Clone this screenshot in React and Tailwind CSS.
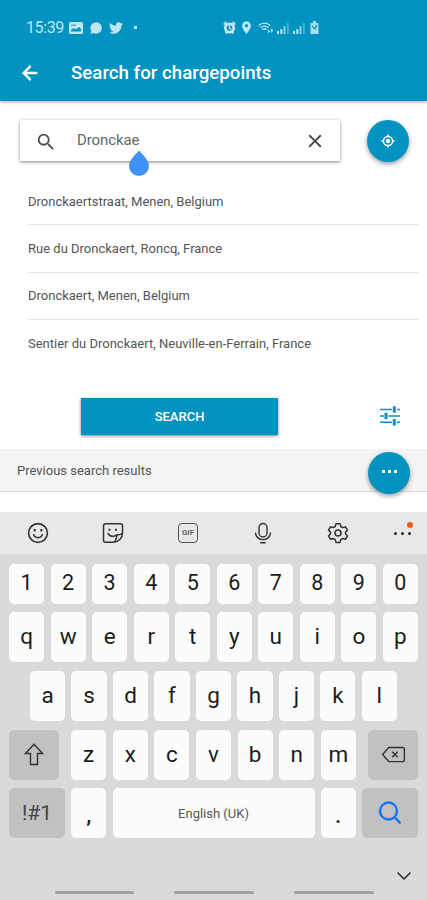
import { ArrowLeft, ChevronDown } from 'lucide-react';
import { MdSearch, MdClose, MdLocationOn } from 'react-icons/md';
import { FaTwitter } from 'react-icons/fa';

const SUGGESTIONS = [
    'Dronckaertstraat, Menen, Belgium',
    'Rue du Dronckaert, Roncq, France',
    'Dronckaert, Menen, Belgium',
    'Sentier du Dronckaert, Neuville-en-Ferrain, France',
];

function Signal() {
    return (
        <svg viewBox="0 0 13 12" className="w-[13px] h-3 shrink-0" fill="currentColor">
            <rect x="0" y="9" width="2" height="3" />
            <rect x="3.3" y="7" width="2" height="5" />
            <rect x="6.6" y="4" width="1.8" height="8" opacity="0.8" />
            <rect x="10" y="1" width="1.8" height="11" opacity="0.4" />
        </svg>
    );
}

function StatusBar() {
    return (
        <div className="h-[55px] pl-[26px] flex items-center text-[#bfe6f3]">
            <span className="w-[38px] text-[16px] tracking-[-0.4px] whitespace-nowrap">15:39</span>
            {/* Notifications */}
            <svg viewBox="0 0 14 12" className="ml-[5px] w-[14px] h-3">
                <rect width="14" height="12" rx="1.5" fill="currentColor" />
                <path d="M2 9.5V8l3-2 2 1.5L10 5l2 2v2.5z" fill="#0093c1" />
                <path d="M2 2.5h5v1.5H2z" fill="#0093c1" opacity="0.6" />
            </svg>
            <svg viewBox="0 0 12 12" className="ml-[7px] w-3 h-3" fill="currentColor">
                <path d="M6.2 0.2a5.7 5.7 0 1 1-2.6 10.8L0.4 11.8l0.9-3A5.7 5.7 0 0 1 6.2 0.2z" />
            </svg>
            <FaTwitter className="ml-[7px] w-[14px] h-[14px]" />
            <span className="ml-[11px] w-[3px] h-[3px] bg-current" />
            {/* Device state */}
            <div className="ml-[86px] flex items-center">
                <svg viewBox="0 0 13 13" className="w-[13px] h-[13px]">
                    <circle cx="6.5" cy="7" r="4.2" stroke="currentColor" strokeWidth="2.8" fill="none" />
                    <path d="M0.8 3.6 3.4 1M12.2 3.6 9.6 1M2.6 12.4l1.4-1.6M10.4 12.4 9 10.8" stroke="currentColor" strokeWidth="2" />
                    <path d="M6.5 4.6V7.3l2 1" stroke="currentColor" strokeWidth="1.2" fill="none" />
                </svg>
                <MdLocationOn className="ml-[3px] w-[15px] h-[15px]" />
                <svg viewBox="0 0 16 13" className="ml-[4px] w-4 h-[13px]" fill="none" stroke="currentColor">
                    <path d="M0.7 4.4a8.4 8.4 0 0 1 11.6 0M2.6 6.7a5.6 5.6 0 0 1 7.8 0M4.5 8.8a2.9 2.9 0 0 1 4 0" strokeWidth="1.4" />
                    <path d="M10 8l2 2.2L10 12.4zM13 7.5l2.4 2L13 12z" fill="currentColor" stroke="none" />
                </svg>
                <span className="ml-[3px]"><Signal /></span>
                <span className="ml-[3px]"><Signal /></span>
                <svg viewBox="0 0 9 13" className="ml-[4px] w-[9px] h-[13px]">
                    <path d="M3 0h3v2h2.5v11h-8V2H3z" fill="currentColor" opacity="0.9" />
                    <path d="M2 5l3 3 2-4" stroke="#0093c1" strokeWidth="1.2" fill="none" />
                </svg>
            </div>
        </div>
    );
}

function Header() {
    return (
        <header className="h-[101px] shrink-0 bg-[#0093c1] text-white shadow-[0_1px_3px_rgba(0,0,0,0.35)]">
            <StatusBar />
            <div className="h-[35px] flex items-center">
                <ArrowLeft className="ml-[19px] w-[22px] h-[22px] shrink-0" strokeWidth={2.5} />
                <h1 className="ml-[30px] pt-[2px] text-[18.7px] font-medium whitespace-nowrap">Search for chargepoints</h1>
            </div>
        </header>
    );
}

function SearchForm() {
    return (
        <div className="pt-[19px] pl-5 flex">
            <div className="relative w-[320px] h-[41px] flex items-center bg-white shadow-[0_1px_3px_rgba(0,0,0,0.5)]">
                <MdSearch className="ml-[15px] mt-[3px] w-[22px] h-[22px] text-[#505050]" />
                <span className="ml-5 flex-1 text-[15px] tracking-[-0.1px] text-[#666]">Dronckae</span>
                <MdClose className="mr-[14px] w-[22px] h-[22px] text-[#444]" />
                {/* Text cursor handle */}
                <svg viewBox="0 0 22 27" className="absolute left-[108px] top-[30px] w-[22px] h-[27px]">
                    <path d="M11 0.5C14 4 21 10 21 16a10 10 0 0 1-20 0C1 10 8 4 11 0.5z" fill="#3f92f6" />
                </svg>
            </div>
            <button className="ml-[27px] w-[42px] h-[42px] rounded-full bg-[#0093c1] text-white flex items-center justify-center shadow-[0_2px_5px_rgba(0,0,0,0.4)]">
                <svg viewBox="0 0 14 14" className="w-[14px] h-[14px]" fill="none" stroke="currentColor">
                    <circle cx="7" cy="7" r="4.6" strokeWidth="1.5" />
                    <circle cx="7" cy="7" r="2.2" fill="currentColor" stroke="none" />
                    <path d="M7 0.400v2M7 11.600v2M0.400 7h2M11.600 7h2" strokeWidth="1.500" />
                </svg>
            </button>
        </div>
    );
}

function TuneIcon() {
    return (
        <svg viewBox="0 0 20 20" className="w-5 h-5" fill="none" stroke="#1690b8">
            <path d="M0 3.500h12M17 3.500h3M0 10h4M8.500 10H20M0 16.200h12M17 16.200h3" strokeWidth="1.500" />
            <path d="M14.300 0.300v6.400M6 6.800v6.400M14.300 13v6.400" strokeWidth="3" />
        </svg>
    );
}

function Toolbar() {
    return (
        <div className="h-[42px] bg-[#e8e8e8] flex items-center text-[#333]">
            <svg viewBox="0 0 22 22" className="ml-[27px] w-[22px] h-[22px]" fill="none" stroke="currentColor" strokeWidth="1.6">
                <circle cx="11" cy="11" r="9.4" />
                <path d="M6.5 12.2c1 4.6 8 4.6 9 0" />
                <path d="M7.7 7v2.4M14.3 7v2.4" strokeWidth="2" />
            </svg>
            <svg viewBox="0 0 22 22" className="ml-[53px] w-[22px] h-[22px]" fill="none" stroke="currentColor" strokeWidth="1.5">
                <path d="M3.5 1.8h15a2 2 0 0 1 2 2v7.4c0 5-4 9-9 9h-8a2 2 0 0 1-2-2V3.800a2 2 0 0 1 2-2z" />
                <path d="M20.300 11.500c-1 1-3 1.300-5.300 1.500-.5 3-1 5.500-2.700 7" />
                <path d="M6 11c1 3.800 6.500 4.400 9 1.500" />
                <path d="M7.500 6.800v2M14 6.800v2" strokeWidth="2" />
            </svg>
            <div className="ml-[54px] w-5 h-5 rounded-[4px] border-[1.5px] border-[#555] flex items-center justify-center text-[8px] font-bold text-[#666]">GIF</div>
            <svg viewBox="0 0 18 22" className="ml-[56px] w-[18px] h-[22px]" fill="none" stroke="currentColor" strokeWidth="1.4">
                <rect x="5" y="1.500" width="8" height="13.500" rx="4" />
                <path d="M1.500 10.500c0 9.500 15 9.500 15 0M6.200 20.800h5.600" />
            </svg>
            <svg viewBox="0 0 22 22" className="ml-[55px] w-[22px] h-[22px]" fill="none" stroke="currentColor" strokeWidth="1.5" strokeLinejoin="round">
                <path d="M9 1.700h4l.8 2.800 1.900 1.100 2.800-.8 2 3.400-2 2.100v1.500l2 2.100-2 3.400-2.800-.8-1.900 1.100-.8 2.800H9l-.8-2.800-1.900-1.100-2.800.8-2-3.400 2-2.100v-1.500l-2-2.100 2-3.400 2.800.8 1.900-1.100z" />
                <circle cx="11" cy="11" r="3" />
            </svg>
            <div className="relative ml-[45px] flex gap-[4px]">
                <span className="w-[3px] h-[3px] rounded-full bg-[#222]" />
                <span className="w-[3px] h-[3px] rounded-full bg-[#222]" />
                <span className="w-[3px] h-[3px] rounded-full bg-[#222]" />
                <span className="absolute left-[13px] top-[-10px] w-[6px] h-[6px] rounded-full bg-[#f05a14]" />
            </div>
        </div>
    );
}

function Key({ label, className = 'w-[35.2px]' }) {
    return (
        <div className={`h-full shrink-0 rounded-[5px] bg-[#fcfcfc] text-[#1c1c1c] flex items-center justify-center ${className}`}>
            {label}
        </div>
    );
}

function Row({ keys }) {
    return keys.split('').map((k) => <Key key={k} label={k} />);
}

function Keyboard() {
    return (
        <section className="h-[388px] shrink-0 bg-[#dadada]">
            <Toolbar />
            <div className="px-[9px] pt-[9.5px] text-[22.5px]">
                <div className="h-[40px] text-[21.5px] flex justify-between"><Row keys="1234567890" /></div>
                <div className="mt-[8.5px] h-[50px] flex justify-between"><Row keys="qwertyuiop" /></div>
                <div className="mt-[9px] h-[50px] px-[21px] flex justify-between"><Row keys="asdfghjkl" /></div>
                <div className="mt-[8.5px] h-[50px] flex justify-between">
                    <div className="w-[50px] rounded-[5px] bg-[#c1c1c1] flex items-center justify-center">
                        <svg viewBox="0 0 20 23" className="w-5 h-[23px]" fill="none" stroke="#333" strokeWidth="1.4">
                            <path d="M10 1.300 18.500 10.500H13.500V21.500H6.500V10.500H1.500z" />
                        </svg>
                    </div>
                    <div className="w-[285px] flex justify-between"><Row keys="zxcvbnm" /></div>
                    <div className="w-[50px] rounded-[5px] bg-[#c1c1c1] flex items-center justify-center">
                        <svg viewBox="0 0 26 18" className="w-[25px] h-[17px]" fill="none" stroke="#333" strokeWidth="1.500">
                            <path d="M8 1.500h14.500a2 2 0 0 1 2 2v11a2 2 0 0 1-2 2H8L1.500 9z" />
                            <path d="M11.500 6l6 6M17.500 6l-6 6" />
                        </svg>
                    </div>
                </div>
                <div className="mt-[8.5px] h-[50px] flex justify-between">
                    <div className="w-[56px] pt-px rounded-[5px] bg-[#c1c1c1] text-[21px] text-[#444] flex items-center justify-center">!#1</div>
                    <Key label="," className="w-[35px] pt-[5px] font-medium" />
                    <Key label="English (UK)" className="w-[202px] pt-[2px] text-[13px] text-[#555]" />
                    <Key label="." className="w-[35px] pt-[5px] font-medium" />
                    <div className="w-[56px] rounded-[5px] bg-[#c1c1c1] flex items-center justify-center">
                        <svg viewBox="0 0 24 24" className="w-6 h-6" fill="none" stroke="#1a73f0" strokeWidth="2.400">
                            <circle cx="10.500" cy="10" r="8.500" />
                            <path d="M16.500 16l6 6.500" />
                        </svg>
                    </div>
                </div>
                <div className="h-[53px] pt-[26px] flex justify-end">
                    <ChevronDown className="mr-[2px] w-[24px] h-[24px] text-[#333]" strokeWidth={1.7} />
                </div>
            </div>
            <div className="pl-[55px] flex gap-[40px]">
                <span className="w-[79px] h-[3px] rounded-full bg-[#a2a2a2]" />
                <span className="w-[80px] h-[3px] rounded-full bg-[#a2a2a2]" />
                <span className="w-[80px] h-[3px] rounded-full bg-[#a2a2a2]" />
            </div>
        </section>
    );
}

export default function App() {
    return (
        <div className="w-[427px] h-[900px] overflow-hidden flex flex-col bg-white font-['Roboto',sans-serif]">
            <Header />
            <main className="flex-1 min-h-0">
                <SearchForm />
                <ul className="mt-4 pl-7 pr-[9px] text-[13px] text-[#555]">
                    {SUGGESTIONS.map((place) => (
                        <li key={place} className="h-[47.3px] pt-px flex items-center border-b border-[#e4e4e4] last:border-0 whitespace-nowrap">
                            {place}
                        </li>
                    ))}
                </ul>
                <div className="mt-[31px] pl-[81px] flex items-center">
                    <button className="w-[197px] h-[37px] bg-[#0093c1] text-white text-[13px] font-medium shadow-[0_1px_3px_rgba(0,0,0,0.5)]">SEARCH</button>
                    <span className="ml-[102px] mb-[2px]"><TuneIcon /></span>
                </div>
                <div className="mt-[14px] h-[43px] px-[17px] flex items-center justify-between bg-[#f4f4f4] border-b border-[#dcdcdc] text-[13px] text-[#555]">
                    <span className="pt-[1px]">Previous search results</span>
                    <button className="relative top-[3px] w-[42px] h-[42px] shrink-0 rounded-full bg-[#0093c1] flex items-center justify-center gap-[3px] pb-[3px] shadow-[0_2px_5px_rgba(0,0,0,0.4)]">
                        <span className="w-[3px] h-[3px] bg-white" />
                        <span className="w-[3px] h-[3px] bg-white" />
                        <span className="w-[3px] h-[3px] bg-white" />
                    </button>
                </div>
            </main>
            <Keyboard />
        </div>
    );
}
